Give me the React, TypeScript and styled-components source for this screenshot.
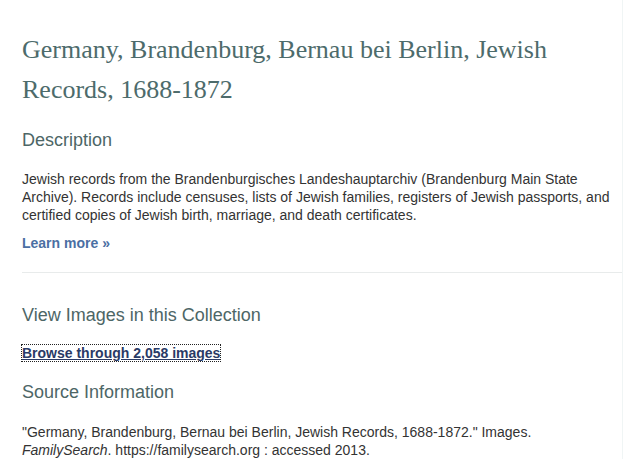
import styled, { createGlobalStyle } from "styled-components";

const GlobalStyle = createGlobalStyle`
  body {
    margin: 0;
    background: #fff;
    font-family: "Liberation Sans", Arial, sans-serif;
  }
`;

function App() {
  return (
    <>
      <GlobalStyle />
      <Page>
        <Title>Germany, Brandenburg, Bernau bei Berlin, Jewish Records, 1688-1872</Title>

        <SectionTitle>Description</SectionTitle>
        <Text>
          Jewish records from the Brandenburgisches Landeshauptarchiv (Brandenburg Main State
          Archive). Records include censuses, lists of Jewish families, registers of Jewish
          passports, and certified copies of Jewish birth, marriage, and death certificates.
        </Text>
        <LearnMore href="#">Learn more »</LearnMore>

        <Divider />

        <SectionTitle $spaced>View Images in this Collection</SectionTitle>
        <BrowseLink href="#">Browse through 2,058 images</BrowseLink>

        <SectionTitle>Source Information</SectionTitle>
        <Text $gap={19}>
          "Germany, Brandenburg, Bernau bei Berlin, Jewish Records, 1688-1872." Images.{" "}
          <em>FamilySearch</em>. https://familysearch.org : accessed 2013.
        </Text>
      </Page>
    </>
  );
}

const Page = styled.div`
  width: 600px;
  padding: 30px 0 0 22px;
  border-right: 1px solid #f0f5f5;
`;

const Title = styled.h1`
  margin: 0;
  font-family: "Palatino Linotype", "Book Antiqua", "Liberation Serif", serif;
  font-weight: normal;
  font-size: 26px;
  line-height: 40px;
  color: #4d6b6b;
`;

const SectionTitle = styled.h2<{ $spaced?: boolean }>`
  margin: ${(p) => (p.$spaced ? "30px" : "18px")} 0 0;
  font-size: 18px;
  font-weight: normal;
  line-height: 24px;
  color: #4d6666;
`;

const Text = styled.p<{ $gap?: number }>`
  margin: ${(p) => p.$gap ?? 18}px 0 0;
  font-size: 14px;
  line-height: 18px;
  color: #333;
`;

const LearnMore = styled.a`
  display: inline-block;
  margin-top: 10px;
  font-size: 14px;
  font-weight: bold;
  line-height: 18px;
  color: #4b6fa3;
  text-decoration: none;
`;

const Divider = styled.hr`
  margin: 20px 0 0;
  border: none;
  border-top: 1px solid #e8ebeb;
`;

const BrowseLink = styled.a`
  display: inline-block;
  margin-top: 18px;
  font-size: 14px;
  font-weight: bold;
  line-height: 16px;
  color: #2a3a66;
  text-decoration: underline;
  outline: 1px dotted #222;
`;

export default App;
